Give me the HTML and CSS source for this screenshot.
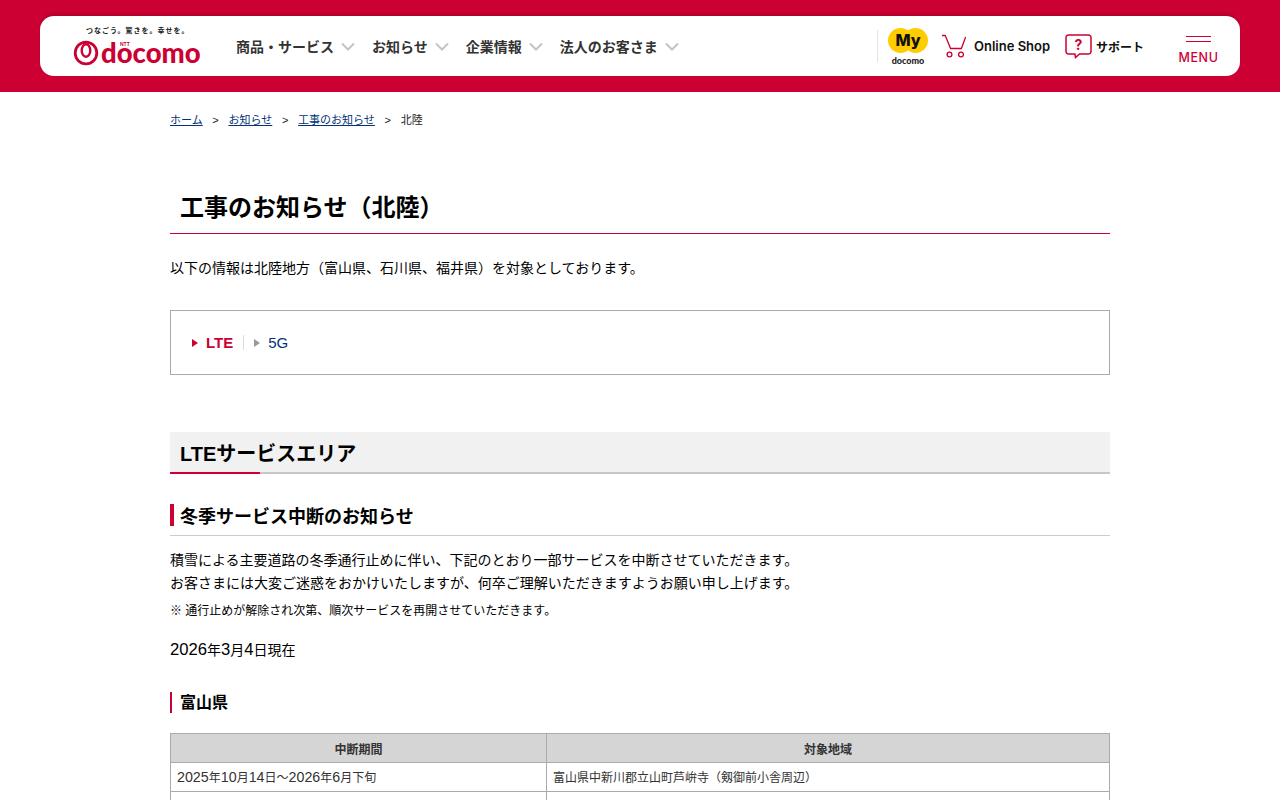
FILE: index.html
```html
<!DOCTYPE html>
<html lang="ja">
<head>
<meta charset="utf-8">
<title>工事のお知らせ（北陸）</title>
<link rel="stylesheet" href="styles.css">
</head>
<body>
<header class="site-header">
  <div class="header-bar">
    <a class="logo" href="#">
      <span class="logo-tagline">つなごう。驚きを。幸せを。</span>
      <span class="logo-main">
        <svg class="logo-mark" width="26" height="26" viewBox="0 0 26 26"><circle cx="13" cy="13" r="10.800" fill="none" stroke="#cc0033" stroke-width="2.800"/><ellipse cx="13" cy="10.500" rx="4.300" ry="6.200" fill="none" stroke="#cc0033" stroke-width="2.400"/></svg>
        <span class="logo-word">docomo</span>
        <span class="logo-ntt">NTT</span>
      </span>
    </a>
    <nav class="main-nav">
      <a class="nav-item" href="#">商品・サービス<svg class="chev" width="16" height="9" viewBox="0 0 16 9"><path d="M2 1.500 8 7.500l6-6" fill="none" stroke="#c4c4c4" stroke-width="2"/></svg></a>
      <a class="nav-item" href="#">お知らせ<svg class="chev" width="16" height="9" viewBox="0 0 16 9"><path d="M2 1.500 8 7.500l6-6" fill="none" stroke="#c4c4c4" stroke-width="2"/></svg></a>
      <a class="nav-item" href="#">企業情報<svg class="chev" width="16" height="9" viewBox="0 0 16 9"><path d="M2 1.500 8 7.500l6-6" fill="none" stroke="#c4c4c4" stroke-width="2"/></svg></a>
      <a class="nav-item" href="#">法人のお客さま<svg class="chev" width="16" height="9" viewBox="0 0 16 9"><path d="M2 1.500 8 7.500l6-6" fill="none" stroke="#c4c4c4" stroke-width="2"/></svg></a>
    </nav>
    <div class="util">
      <a class="my" href="#">
        <svg class="my-badge" width="40" height="25" viewBox="0 0 40 25"><circle cx="12.500" cy="12.500" r="12.500" fill="#ffcc00"/><circle cx="27.500" cy="12.500" r="12.500" fill="#ffcc00"/><text x="20" y="18" text-anchor="middle" class="my-label">My</text></svg>
        <span class="my-text">docomo</span>
      </a>
      <a class="shop" href="#">
        <svg class="cart" width="26" height="24" viewBox="0 0 26 24"><path d="M1 1.500h3.200L9.600 14.500h10.800L24.600 3" fill="none" stroke="#cc0033" stroke-width="1.300"/><circle cx="8.500" cy="20.500" r="2.400" fill="none" stroke="#cc0033" stroke-width="1.300"/><circle cx="20" cy="20.500" r="2.400" fill="none" stroke="#cc0033" stroke-width="1.300"/></svg>
        <span>Online Shop</span>
      </a>
      <a class="support" href="#">
        <svg width="27" height="25" viewBox="0 0 27 25"><path d="M3.500 1h20a2.500 2.500 0 0 1 2.500 2.500v14a2.500 2.500 0 0 1-2.500 2.500H14.500l-4 3.500-.6-3.500H3.500A2.500 2.500 0 0 1 1 17.500v-14A2.500 2.500 0 0 1 3.500 1z" fill="none" stroke="#cc0033" stroke-width="1.500"/><text x="13.500" y="16" text-anchor="middle" class="q">?</text></svg>
        <span>サポート</span>
      </a>
      <a class="menu" href="#">
        <span class="menu-lines"></span>
        <span class="menu-text">MENU</span>
      </a>
    </div>
  </div>
</header>
<main class="content">
  <ol class="crumbs">
    <li><a href="#">ホーム</a></li>
    <li><a href="#">お知らせ</a></li>
    <li><a href="#">工事のお知らせ</a></li>
    <li>北陸</li>
  </ol>
  <h1 class="page-title">工事のお知らせ（北陸）</h1>
  <p class="lead">以下の情報は北陸地方（富山県、石川県、福井県）を対象としております。</p>
  <div class="tabs">
    <a class="tab tab-active" href="#">LTE</a>
    <a class="tab" href="#">5G</a>
  </div>
  <h2 class="section-title">LTEサービスエリア</h2>
  <h3 class="sub-title">冬季サービス中断のお知らせ</h3>
  <p class="body-text">積雪による主要道路の冬季通行止めに伴い、下記のとおり一部サービスを中断させていただきます。<br>お客さまには大変ご迷惑をおかけいたしますが、何卒ご理解いただきますようお願い申し上げます。</p>
  <p class="note">※ 通行止めが解除され次第、順次サービスを再開させていただきます。</p>
  <p class="date"><span class="num">2026</span>年<span class="num">3</span>月<span class="num">4</span>日現在</p>
  <h4 class="pref">富山県</h4>
  <table class="area">
    <thead><tr><th class="col-a">中断期間</th><th>対象地域</th></tr></thead>
    <tbody>
      <tr><td><span class="num">2025</span>年<span class="num">10</span>月<span class="num">14</span>日～<span class="num">2026</span>年<span class="num">6</span>月下旬</td><td>富山県中新川郡立山町芦峅寺（剱御前小舎周辺）</td></tr>
      <tr><td></td><td></td></tr>
    </tbody>
  </table>
</main>
</body>
</html>
```
FILE: styles.css
```css
* { box-sizing: border-box; }
html, body { margin: 0; padding: 0; height: 800px; overflow: hidden; }
body {
  font-family: "Liberation Sans", "Noto Sans CJK JP", sans-serif;
  color: #000;
  background: #fff;
  font-size: 14px;
}
a { text-decoration: none; color: inherit; }
.num { font-size: 1.19em; line-height: 0; }

.site-header { background: #cc0033; height: 92px; padding: 16px 40px; }
.header-bar {
  height: 60px;
  background: #fff;
  border-radius: 14px;
  box-shadow: 0 -2px 3px rgba(0, 0, 0, 0.16);
  display: flex;
  align-items: center;
}
.logo { width: 196px; padding: 11px 0 0 33px; height: 60px; display: block; flex: none; }
.logo-tagline {
  display: block;
  font-size: 7px;
  line-height: 8px;
  font-weight: 700;
  letter-spacing: 1px;
  padding-left: 13px;
  color: #222;
  white-space: nowrap;
}
.logo-main { display: flex; align-items: center; position: relative; margin-top: 5px; height: 26px; }
.logo-mark { flex: none; }
.logo-word {
  font-family: Lato, sans-serif;
  font-weight: 900;
  font-size: 27.5px;
  line-height: 26px;
  color: #cc0033;
  margin-left: 2px;
}
.logo-ntt {
  position: absolute;
  left: 47px;
  top: 1px;
  font-size: 5px;
  font-weight: 700;
  color: #cc0033;
  line-height: 6px;
}

.main-nav { display: flex; margin-top: -1px; }
.nav-item {
  display: flex;
  align-items: center;
  font-size: 14px;
  font-weight: 700;
  color: #333;
  margin-right: 16px;
  white-space: nowrap;
}
.chev { margin-left: 6px; margin-top: 2px; }

.util { margin-left: auto; display: flex; align-items: center; height: 60px; }
.my {
  border-left: 1px solid #e4e4e4;
  height: 32px;
  width: 65px;
  display: flex;
  flex-direction: column;
  align-items: center;
  padding-right: 4px;
}
.my-badge { margin-top: -2px; flex: none; }
.my-label { font-family: Inter, sans-serif; font-weight: 800; font-size: 16px; fill: #111; }
.my-text {
  font-family: Lato, sans-serif;
  font-weight: 900;
  font-size: 9px;
  line-height: 9px;
  margin-top: 3px;
  color: #222;
}
.shop { display: flex; align-items: center; gap: 7px; width: 123px; }
.cart { margin-left: -1px; }
.shop span { font-family: Inter, sans-serif; font-weight: 600; font-size: 13px; color: #111; white-space: nowrap; }
.support { display: flex; align-items: center; gap: 4px; width: 114px; }
.support span { font-size: 12px; font-weight: 700; color: #111; white-space: nowrap; }
.q { font-family: Inter, sans-serif; font-size: 14px; font-weight: 700; fill: #cc0033; }
.menu { width: 61px; height: 60px; display: flex; flex-direction: column; align-items: center; padding-right: 22px; flex: none; }
.menu-lines { width: 25px; height: 6px; margin-top: 20px; border-top: 1px solid #cc0033; border-bottom: 1px solid #cc0033; flex: none; }
.menu-text { font-family: Inter, sans-serif; font-weight: 500; font-size: 12.5px; line-height: 14px; letter-spacing: 0.6px; color: #cc0033; margin-top: 9px; }

.content { width: 940px; margin: 0 auto; }
.crumbs {
  list-style: none;
  display: flex;
  margin: 0;
  padding: 20px 0 0;
  font-size: 11px;
  line-height: 16px;
  color: #222;
}
.crumbs li + li::before { content: ">"; margin: 0 9.7px; color: #222; }
.crumbs a { color: #003377; text-decoration: underline; }

.page-title {
  margin: 62px 0 0;
  padding: 0 10px 7px;
  font-size: 24px;
  line-height: 36px;
  font-weight: 700;
  border-bottom: 1px solid #cc0033;
}
.lead { margin: 22px 0 0; line-height: 24px; }
.tabs {
  margin-top: 30px;
  height: 65px;
  border: 1px solid #aaa;
  display: flex;
  align-items: center;
  padding: 0 21px;
  font-size: 15px;
}
.tab {
  position: relative;
  padding-left: 14px;
  color: #003377;
  line-height: 15px;
}
.tab::before {
  content: "";
  position: absolute;
  left: 0;
  top: 4px;
  border-left: 6px solid #999;
  border-top: 4px solid transparent;
  border-bottom: 4px solid transparent;
}
.tab-active { color: #cc0033; font-weight: 700; padding-right: 10px; margin-right: 10px; border-right: 1px solid #ddd; }
.tab-active::before { border-left-color: #cc0033; }

.section-title {
  margin: 57px 0 0;
  height: 42px;
  background: #f1f1f1;
  border-bottom: 2px solid #c8c8c8;
  padding: 0 10px;
  font-size: 20px;
  line-height: 45px;
  font-weight: 700;
  position: relative;
}
.section-title::after {
  content: "";
  position: absolute;
  left: 0;
  bottom: -2px;
  width: 90px;
  height: 2px;
  background: #cc0033;
}
.sub-title {
  margin: 30px 0 0;
  height: 32px;
  padding: 0 0 6px 10px;
  border-bottom: 1px solid #ccc;
  font-size: 18px;
  line-height: 26px;
  font-weight: 700;
  position: relative;
}
.sub-title::before {
  content: "";
  position: absolute;
  left: 0;
  top: 0;
  width: 4px;
  height: 22px;
  background: #cc0033;
}
.body-text { margin: 13px 0 0; line-height: 23px; }
.note { margin: 6px 0 0; font-size: 12px; line-height: 20px; }
.date { margin: 17px 0 0; line-height: 24px; }
.pref {
  margin: 30px 0 0;
  font-size: 16px;
  line-height: 21px;
  font-weight: 700;
  border-left: 2px solid #cc0033;
  padding-left: 8px;
}
.area { margin-top: 20px; width: 940px; border-collapse: collapse; table-layout: fixed; font-size: 12px; }
.area th, .area td { border: 1px solid #aaa; padding: 0 6px; height: 29px; text-align: left; color: #333; font-weight: 400; }
.area td { padding-bottom: 2px; }
.area th { background: #d5d5d5; text-align: center; font-weight: 700; }
.col-a { width: 376px; }
```
